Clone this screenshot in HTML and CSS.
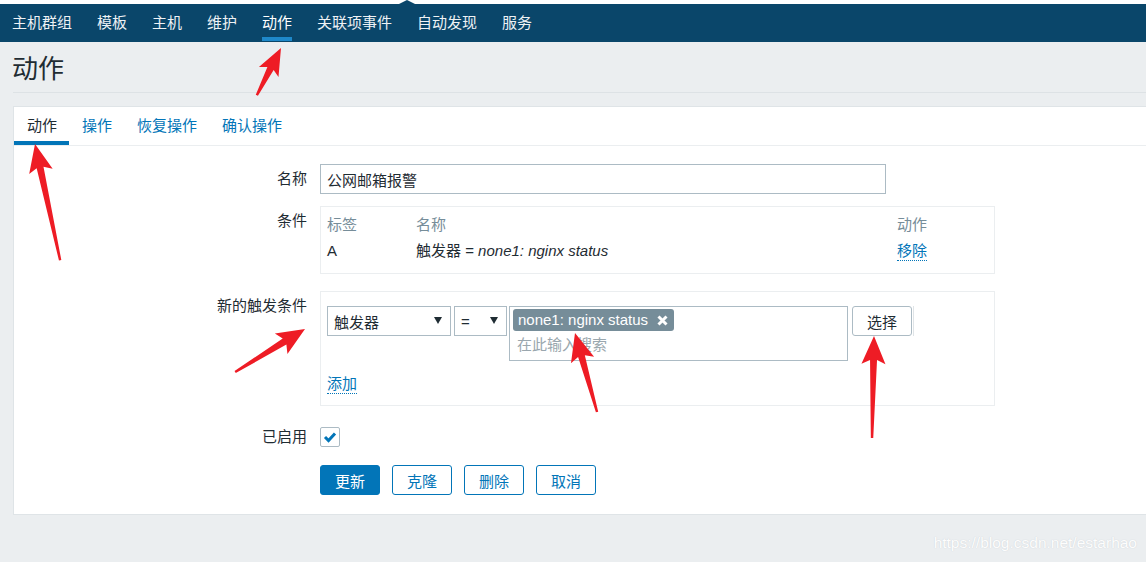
FILE: index.html
```html
<!DOCTYPE html>
<html lang="zh">
<head>
<meta charset="utf-8">
<title>动作</title>
<link rel="stylesheet" href="styles.css">
</head>
<body>
<div class="topstrip"><span class="notch"></span></div>
<nav class="nav">
  <a class="nav-item">主机群组</a>
  <a class="nav-item">模板</a>
  <a class="nav-item">主机</a>
  <a class="nav-item">维护</a>
  <a class="nav-item active">动作</a>
  <a class="nav-item">关联项事件</a>
  <a class="nav-item">自动发现</a>
  <a class="nav-item">服务</a>
</nav>
<header class="page-header"><h1 class="title">动作</h1></header>
<main class="card">
  <div class="tabs">
    <a class="tab active">动作</a>
    <a class="tab">操作</a>
    <a class="tab">恢复操作</a>
    <a class="tab">确认操作</a>
  </div>
  <form class="form">
    <div class="form-row">
      <label class="label">名称</label>
      <input class="text-input" type="text" value="公网邮箱报警">
    </div>
    <div class="form-row row-conditions">
      <label class="label">条件</label>
      <div class="cond-box">
        <div class="cond-grid cond-head"><span>标签</span><span>名称</span><span>动作</span></div>
        <div class="cond-grid cond-data"><span>A</span><span>触发器 = <em>none1: nginx status</em></span><span><a class="link">移除</a></span></div>
      </div>
    </div>
    <div class="form-row row-new">
      <label class="label">新的触发条件</label>
      <div class="new-box">
        <div class="cond-line">
          <div class="select select-type"><span>触发器</span><span class="caret"></span></div>
          <div class="select select-op"><span>=</span><span class="caret"></span></div>
          <div class="multiselect">
            <span class="tag">none1: nginx status<svg class="tag-x" width="11" height="11" viewBox="0 0 11 11"><path d="M1.5 1.5 L9.5 9.5 M9.5 1.5 L1.5 9.5" stroke="#fff" stroke-width="3" stroke-linecap="butt"/></svg></span>
            <div class="placeholder">在此输入搜索</div>
          </div>
          <button class="btn-select" type="button">选择</button>
          <span class="divider"></span>
        </div>
        <a class="link add-link">添加</a>
      </div>
    </div>
    <div class="form-row row-enabled">
      <label class="label">已启用</label>
      <span class="checkbox"><svg width="18" height="18" viewBox="0 0 18 18"><path d="M4 9 L7.5 12.5 L14 5.5" fill="none" stroke="#0275b8" stroke-width="3"/></svg></span>
    </div>
    <div class="form-row row-buttons">
      <span class="label"></span>
      <div class="buttons">
        <button class="btn btn-primary" type="button">更新</button>
        <button class="btn" type="button">克隆</button>
        <button class="btn" type="button">删除</button>
        <button class="btn" type="button">取消</button>
      </div>
    </div>
  </form>
</main>
<div class="watermark">https://blog.csdn.net/estarhao</div>
<svg class="annotations" width="1146" height="562" viewBox="0 0 1146 562">
  <g fill="#ee1c25">
    <polygon transform="translate(281 48) rotate(-62.9)" points="0,0 -27,-11 -23,-3.5 -53,-1.2 -53,1.2 -23,3.5 -27,11"/>
    <polygon transform="translate(35 144) rotate(-102.2)" points="0,0 -28,-12 -24,-3.5 -119,-1.2 -119,1.2 -24,3.5 -28,12"/>
    <polygon transform="translate(305 329) rotate(-31.6)" points="0,0 -28,-12 -24,-3.5 -82,-1.2 -82,1.2 -24,3.5 -28,12"/>
    <polygon transform="translate(575 333) rotate(-105.6)" points="0,0 -28,-12 -24,-3.5 -82,-1.2 -82,1.2 -24,3.5 -28,12"/>
    <polygon transform="translate(874 336) rotate(-88.9)" points="0,0 -28,-12 -24,-3.5 -102,-1.2 -102,1.2 -24,3.5 -28,12"/>
  </g>
</svg>
</body>
</html>
```
FILE: styles.css
```css
html, body {
  margin: 0;
  padding: 0;
}
body {
  width: 1146px;
  height: 562px;
  overflow: hidden;
  position: relative;
  background: #ebeef0;
  font-family: "Liberation Sans", "Noto Sans CJK SC", Arial, sans-serif;
  font-size: 15px;
  color: #1f2c33;
}
.topstrip {
  height: 4px;
  background: #fff;
  position: relative;
}
.notch {
  position: absolute;
  left: 399px;
  top: 0;
  width: 0;
  height: 0;
  border-left: 8px solid transparent;
  border-right: 8px solid transparent;
  border-bottom: 4px solid #0a466a;
}
.nav {
  display: flex;
  gap: 25px;
  height: 38px;
  padding-left: 12px;
  background: #0a466a;
}
.nav-item {
  display: block;
  line-height: 37px;
  color: #eef2f5;
  white-space: nowrap;
}
.nav-item.active {
  color: #fff;
  box-shadow: inset 0 -4px 0 0 #1e88c9;
  margin-bottom: 1px;
}
.page-header {
  margin-left: 13px;
  padding: 12px 0 8px;
  border-bottom: 1px solid #dde2e5;
}
.title {
  margin: 0 0 0 -1px;
  font-size: 26px;
  line-height: 30px;
  font-weight: normal;
  color: #1f2c33;
}
.card {
  display: block;
  margin: 13px -2px 0 13px;
  background: #fff;
  border: 1px solid #dfe4e7;
}
.tabs {
  display: flex;
  height: 38px;
  border-bottom: 1px solid #ebeef0;
}
.tab {
  display: block;
  padding: 0 12px 0 13px;
  line-height: 38px;
  color: #0275b8;
  white-space: nowrap;
}
.tab.active {
  color: #1f2c33;
  box-shadow: inset 0 -4px 0 0 #0275b8;
}
.form {
  padding: 18px 0 19px;
}
.form-row {
  display: flex;
  align-items: flex-start;
}
.row-conditions { margin-top: 12px; }
.row-new { margin-top: 17px; }
.row-enabled { margin-top: 16px; }
.row-buttons { margin-top: 13px; }
.label {
  flex: none;
  width: 293px;
  padding-right: 13px;
  text-align: right;
  line-height: 30px;
  color: #1f2c33;
}
.text-input {
  box-sizing: border-box;
  width: 566px;
  height: 30px;
  margin: 0;
  padding: 0 6px;
  border: 1px solid #acbbc4;
  border-radius: 0;
  font: inherit;
  color: #1f2c33;
  background: #fff;
  outline: none;
}
.cond-box {
  box-sizing: border-box;
  width: 675px;
  border: 1px solid #ebeef0;
  padding: 6px 6px 8px;
}
.cond-grid {
  display: grid;
  grid-template-columns: 89px 481px 1fr;
}
.cond-head {
  line-height: 24px;
  color: #768d99;
}
.cond-data {
  line-height: 28px;
}
.cond-data em {
  font-style: italic;
}
.link {
  color: #0275b8;
  border-bottom: 1px dotted #0275b8;
  line-height: 18px;
  display: inline-block;
}
.new-box {
  box-sizing: border-box;
  width: 675px;
  border: 1px solid #ebeef0;
  padding: 14px 6px 11px;
}
.cond-line {
  display: flex;
  align-items: flex-start;
}
.select {
  box-sizing: border-box;
  height: 30px;
  display: flex;
  align-items: center;
  justify-content: space-between;
  border: 1px solid #acbbc4;
  padding: 0 8px 0 6px;
  background: #fff;
}
.select-type {
  width: 124px;
  margin-right: 3px;
}
.select-op {
  width: 53px;
  margin-right: 2px;
}
.caret {
  width: 0;
  height: 0;
  border-left: 4px solid transparent;
  border-right: 4px solid transparent;
  border-top: 7px solid #1f2c33;
  margin-top: -2px;
}
.multiselect {
  box-sizing: border-box;
  width: 339px;
  height: 55px;
  border: 1px solid #acbbc4;
  padding: 2px 3px;
  margin-right: 4px;
}
.tag {
  display: inline-flex;
  align-items: center;
  gap: 9px;
  height: 22px;
  padding: 0 6px 0 5px;
  border-radius: 3px;
  background: #768d99;
  color: #fff;
  line-height: 22px;
}
.tag-x {
  display: block;
}
.placeholder {
  margin-top: 2px;
  padding-left: 4px;
  line-height: 24px;
  color: #9aa7ae;
}
.btn-select {
  box-sizing: border-box;
  width: 60px;
  height: 30px;
  margin: 0;
  padding: 0;
  border: 1px solid #acbbc4;
  border-radius: 3px;
  background: #fff;
  font: inherit;
  color: #1f2c33;
}
.divider {
  width: 1px;
  height: 30px;
  margin-left: 1px;
  background: #dfe4e7;
}
.add-link {
  margin-top: 14px;
}
.checkbox {
  box-sizing: border-box;
  display: flex;
  align-items: center;
  justify-content: center;
  width: 20px;
  height: 20px;
  margin-top: 5px;
  border: 1px solid #acbbc4;
  border-radius: 2px;
  background: #fff;
}
.checkbox svg {
  display: block;
}
.buttons {
  display: flex;
  gap: 12px;
}
.btn {
  box-sizing: border-box;
  width: 60px;
  height: 30px;
  margin: 0;
  padding: 0;
  border: 1px solid #0275b8;
  border-radius: 3px;
  background: #fff;
  color: #0275b8;
  font: inherit;
}
.btn-primary {
  background: #0275b8;
  color: #fff;
}
.watermark {
  position: absolute;
  right: 9px;
  top: 532px;
  font-family: "Liberation Sans", Arial, sans-serif;
  font-size: 15.5px;
  line-height: 22px;
  color: #fdfdfd;
  text-shadow: 0 0 1px rgba(150, 160, 170, 0.45);
}
.annotations {
  position: absolute;
  left: 0;
  top: 0;
  pointer-events: none;
}
```
